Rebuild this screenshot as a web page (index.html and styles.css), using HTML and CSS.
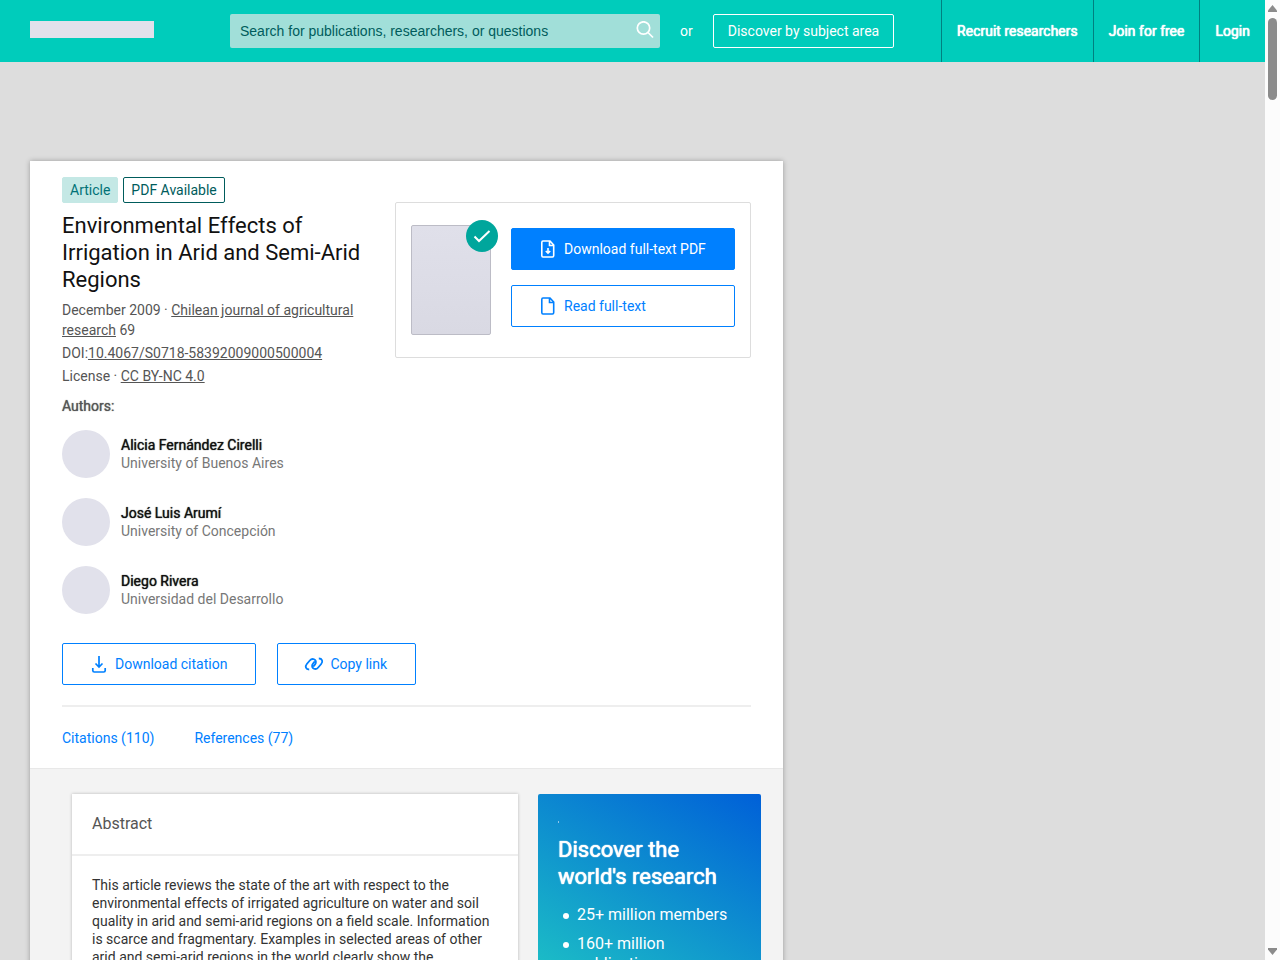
FILE: index.html
```html
<!DOCTYPE html>
<html lang="en">
<head>
    <meta charset="UTF-8">
    <meta name="viewport" content="width=device-width, initial-scale=1.0">
    <title>Environmental Effects of Irrigation in Arid and Semi-Arid Regions</title>
    <link rel="stylesheet" href="styles.css">
</head>
<body>
    <div class="page">
        <header class="header">
            <a class="logo" href="#" aria-label="Home"></a>
            <form class="search">
                <input type="text" aria-label="Search" placeholder="Search for publications, researchers, or questions">
                <button type="button" class="search-button" aria-label="Search">
                    <svg width="18" height="18" viewBox="0 0 18 18" fill="none" stroke="#fff" stroke-width="1.7">
                        <circle cx="7.500" cy="7" r="6.200"/>
                        <path d="M12 11.500l5 5"/>
                    </svg>
                </button>
            </form>
            <span class="or">or</span>
            <a class="discover" href="#">Discover by subject area</a>
            <nav class="nav">
                <a href="#">Recruit researchers</a>
                <a href="#">Join for free</a>
                <a href="#">Login</a>
            </nav>
        </header>

        <main class="publication">
            <section class="intro">
                <div class="intro-top">
                    <div class="details">
                        <div class="badges">
                            <span class="badge badge-type">Article</span>
                            <span class="badge badge-pdf">PDF Available</span>
                        </div>
                        <h1>Environmental Effects of Irrigation in Arid and Semi-Arid Regions</h1>
                        <p class="meta">December 2009 · <a href="#">Chilean journal of agricultural research</a> 69</p>
                        <p class="meta">DOI:<a href="#">10.4067/S0718-58392009000500004</a></p>
                        <p class="meta">License · <a href="#">CC BY-NC 4.0</a></p>
                    </div>

                    <div class="fulltext">
                        <div class="preview">
                            <span class="check">
                                <svg width="32" height="32" viewBox="0 0 32 32" fill="none" stroke="#fff" stroke-width="2">
                                    <path d="M8.500 16.500l4.500 4.500L23.500 11"/>
                                </svg>
                            </span>
                        </div>
                        <div class="fulltext-buttons">
                            <button type="button" class="button button-primary">
                                <svg width="16" height="18" viewBox="0 0 16 18" fill="none" stroke="currentColor" stroke-width="1.6">
                                    <path d="M10 1H3Q1.800 1 1.800 2.500v13Q1.800 17 3 17h9.500q1.200 0 1.200-1.500V5zM9.500 1v4.500H14"/>
                                    <path d="M8 8v5M5.800 11L8 13.200l2.200-2.200"/>
                                </svg>
                                Download full-text PDF
                            </button>
                            <button type="button" class="button">
                                <svg width="16" height="18" viewBox="0 0 16 18" fill="none" stroke="currentColor" stroke-width="1.6">
                                    <path d="M10 1H3Q1.800 1 1.800 2.500v13Q1.800 17 3 17h9.500q1.200 0 1.200-1.500V5zM9.500 1v4.500H14"/>
                                </svg>
                                Read full-text
                            </button>
                        </div>
                    </div>
                </div>

                <h2 class="authors-title">Authors:</h2>
                <ul class="authors">
                    <li>
                        <span class="avatar"></span>
                        <div>
                            <a href="#">Alicia Fernández Cirelli</a>
                            <p>University of Buenos Aires</p>
                        </div>
                    </li>
                    <li>
                        <span class="avatar"></span>
                        <div>
                            <a href="#">José Luis Arumí</a>
                            <p>University of Concepción</p>
                        </div>
                    </li>
                    <li>
                        <span class="avatar"></span>
                        <div>
                            <a href="#">Diego Rivera</a>
                            <p>Universidad del Desarrollo</p>
                        </div>
                    </li>
                </ul>

                <div class="actions">
                    <button type="button" class="button">
                        <svg width="16" height="18" viewBox="0 0 16 18" fill="none" stroke="currentColor" stroke-width="1.7">
                            <path d="M8 1v11M4.500 8.500L8 12l3.500-3.500"/>
                            <path d="M1.800 13v2.500Q1.800 17 3.300 17h9.400q1.500 0 1.500-1.500V13"/>
                        </svg>
                        Download citation
                    </button>
                    <button type="button" class="button">
                        <svg width="16" height="18" viewBox="0 0 16 18" fill="none" stroke="currentColor" stroke-width="1.8" overflow="visible">
                            <path d="M3.200 14.500C-.2 14.500-1.300 11.500.8 9L3.800 5.500C6.300 2.600 10.500 4.300 9.800 8Q9.600 9 7.200 11.700"/>
                            <path d="M12.800 3.500C16.200 3.500 17.300 6.500 15.200 9L12.200 12.500C9.700 15.400 5.500 13.700 6.200 10Q6.400 9 8.800 6.300"/>
                        </svg>
                        Copy link
                    </button>
                </div>

                <nav class="tabs">
                    <a href="#">Citations (110)</a>
                    <a href="#">References (77)</a>
                </nav>
            </section>

            <div class="content">
                <article class="abstract">
                    <h2>Abstract</h2>
                    <p>This article reviews the state of the art with respect to the environmental effects of irrigated agriculture on water and soil quality in arid and semi-arid regions on a field scale. Information is scarce and fragmentary. Examples in selected areas of other arid and semi-arid regions in the world clearly show the</p>
                </article>
                <aside class="promo">
                    <span class="promo-mark"></span>
                    <h2>Discover the world's research</h2>
                    <ul>
                        <li>25+ million members</li>
                        <li>160+ million publication pages</li>
                    </ul>
                </aside>
            </div>
        </main>
    </div>

    <div class="scrollbar" aria-hidden="true">
        <svg width="9" height="7" viewBox="0 0 9 7"><path d="M4.500 0L9 5.500V7H0V5.500z" fill="#8b8b8b"/></svg>
        <span class="thumb"></span>
        <svg width="9" height="7" viewBox="0 0 9 7"><path d="M4.500 7L9 1.500V0H0v1.500z" fill="#8b8b8b"/></svg>
    </div>
</body>
</html>
```
FILE: styles.css
```css
* {
    box-sizing: border-box;
}

body {
    margin: 0;
    display: flex;
    height: 100vh;
    overflow: hidden;
    background: #ddd;
    color: #111;
    font-family: Roboto, Arial, sans-serif;
    font-size: 14px;
    line-height: 18px;
}

h1, h2, p, ul {
    margin: 0;
    padding: 0;
    font-weight: normal;
}

a {
    color: inherit;
    text-decoration: none;
}

.page {
    flex: 1;
    min-width: 0;
}

/* Header */
.header {
    display: flex;
    align-items: center;
    height: 62px;
    padding-left: 30px;
    background: #00ccbb;
    color: #fff;
}

.logo {
    width: 124px;
    height: 17px;
    margin: 0 76px 4px 0;
    background: #e1e1eb;
}

.search {
    display: flex;
    align-items: center;
    flex: 0 1 430px;
    height: 34px;
    border-radius: 2px;
    background: #a1dfd9;
}

.search input {
    flex: 1;
    min-width: 0;
    height: 34px;
    padding: 0 10px;
    border: 0;
    background: none;
    font-family: "Liberation Sans", Arial, sans-serif;
    font-size: 14px;
}

.search input::placeholder {
    color: #005c5c;
    opacity: 1;
}

.search-button {
    display: flex;
    height: 34px;
    padding: 7px 6px 0 0;
    border: 0;
    background: none;
}

.or {
    margin: 0 20px;
}

.discover {
    padding: 7px 14px;
    border: 1px solid #fff;
    border-radius: 2px;
    line-height: 18px;
    white-space: nowrap;
}

.nav {
    display: flex;
    margin-left: auto;
    line-height: 62px;
    white-space: nowrap;
}

.nav a {
    padding: 0 15px;
    border-left: 1px solid #008080;
}

/* Regular cut, thickened without changing the text's width */
.nav a,
.authors-title,
.authors a,
.promo h2 {
    text-shadow: 0 0 1px currentColor;
}

.nav a,
.promo h2 {
    text-shadow: 0 0 1px currentColor, 0 0 1px currentColor;
}

/* Publication */
.publication {
    max-width: 753px;
    margin: 99px 30px 0;
    background: #f3f3f3;
    box-shadow: 0 0 5px rgba(0, 0, 0, 0.3);
}

.intro {
    padding: 16px 32px 0;
    background: #fff;
    border-bottom: 1px solid #e8e8e8;
}

.intro-top {
    display: grid;
    grid-template-columns: minmax(0, 303fr) minmax(0, 356fr);
    gap: 30px;
    align-items: start;
}

.badges {
    display: flex;
    gap: 5px;
    margin-bottom: 9px;
}

.badge {
    padding: 3px 7px;
    border: 1px solid #c4e8e5;
    border-radius: 2px;
    background: #c4e8e5;
    color: #007277;
}

.badge-pdf {
    border-color: #005c5c;
    background: #fff;
    color: #005c5c;
}

h1 {
    margin-bottom: 7px;
    font-size: 22px;
    line-height: 27px;
}

.meta {
    margin-bottom: 3px;
    color: #555;
    line-height: 20px;
}

.meta a {
    text-decoration: underline;
}

.fulltext {
    display: flex;
    gap: 20px;
    margin-top: 25px;
    padding: 22px 15px;
    border: 1px solid #ddd;
    border-radius: 2px;
}

.preview {
    position: relative;
    flex: none;
    width: 80px;
    height: 110px;
    border: 1px solid #bcbcc6;
    border-radius: 2px;
    background: linear-gradient(#e0e0ea, #d9d9e3);
}

.check {
    position: absolute;
    top: -6px;
    right: -8px;
    width: 32px;
    height: 32px;
    border-radius: 50%;
    background: #00a69c;
}

.fulltext-buttons {
    display: flex;
    flex: 1;
    flex-direction: column;
    gap: 15px;
    padding-top: 3px;
}

.button {
    display: flex;
    align-items: center;
    gap: 8px;
    height: 42px;
    padding: 0 28px;
    border: 1px solid #0080ff;
    border-radius: 2px;
    background: #fff;
    color: #0080ff;
    font-family: inherit;
    font-size: 14px;
    white-space: nowrap;
    cursor: pointer;
}

.button-primary {
    background: #0080ff;
    color: #fff;
}

.authors-title {
    margin: 8px 0 15px;
    color: #555;
    font-size: 14px;
}

.authors {
    display: flex;
    flex-direction: column;
    gap: 20px;
    list-style: none;
}

.authors li {
    display: flex;
    gap: 11px;
    height: 48px;
}

.authors div {
    padding-top: 6px;
}

.authors p {
    color: #777;
}

.avatar {
    width: 48px;
    height: 48px;
    border-radius: 50%;
    background: #e1e1eb;
}

.actions {
    display: flex;
    gap: 21px;
    padding: 29px 0 20px;
    border-bottom: 2px solid #eee;
}

.tabs {
    display: flex;
    gap: 40px;
    padding: 22px 0 21px;
    color: #0080ff;
}

/* Content */
.content {
    display: grid;
    grid-template-columns: minmax(0, 2fr) minmax(0, 1fr);
    gap: 20px;
    align-items: start;
    padding: 25px 22px 20px 42px;
}

.abstract {
    background: #fff;
    box-shadow: 0 0 3px rgba(0, 0, 0, 0.25);
}

.abstract h2 {
    padding: 20px;
    border-bottom: 2px solid #eee;
    color: #555;
    font-size: 16px;
    line-height: 20px;
}

.abstract p {
    padding: 20px;
    color: #333;
}

.promo {
    padding: 27px 20px 20px;
    border-radius: 2px;
    background: linear-gradient(30deg, #1fc8c4, #0060d8);
    color: #fff;
    font-size: 16px;
}

.promo-mark {
    display: block;
    width: 1px;
    height: 2px;
    background: #8fc6ea;
}

.promo h2 {
    margin: 13px 0 15px;
    font-size: 22px;
    line-height: 27px;
}

.promo ul {
    padding-left: 5px;
    list-style: none;
}

.promo li {
    display: flex;
    gap: 8px;
    margin-bottom: 9px;
    line-height: 20px;
}

.promo li::before {
    content: "";
    flex: none;
    width: 6px;
    height: 6px;
    margin-top: 8px;
    border-radius: 50%;
    background: #fff;
}

/* Scrollbar */
.scrollbar {
    display: flex;
    flex-direction: column;
    align-items: center;
    width: 15px;
    padding: 5px 0;
    background: #fcfcfc;
}

.thumb {
    width: 9px;
    height: 82px;
    margin: 6px 0 auto;
    border-radius: 5px;
    background: #8b8b8b;
}
```
